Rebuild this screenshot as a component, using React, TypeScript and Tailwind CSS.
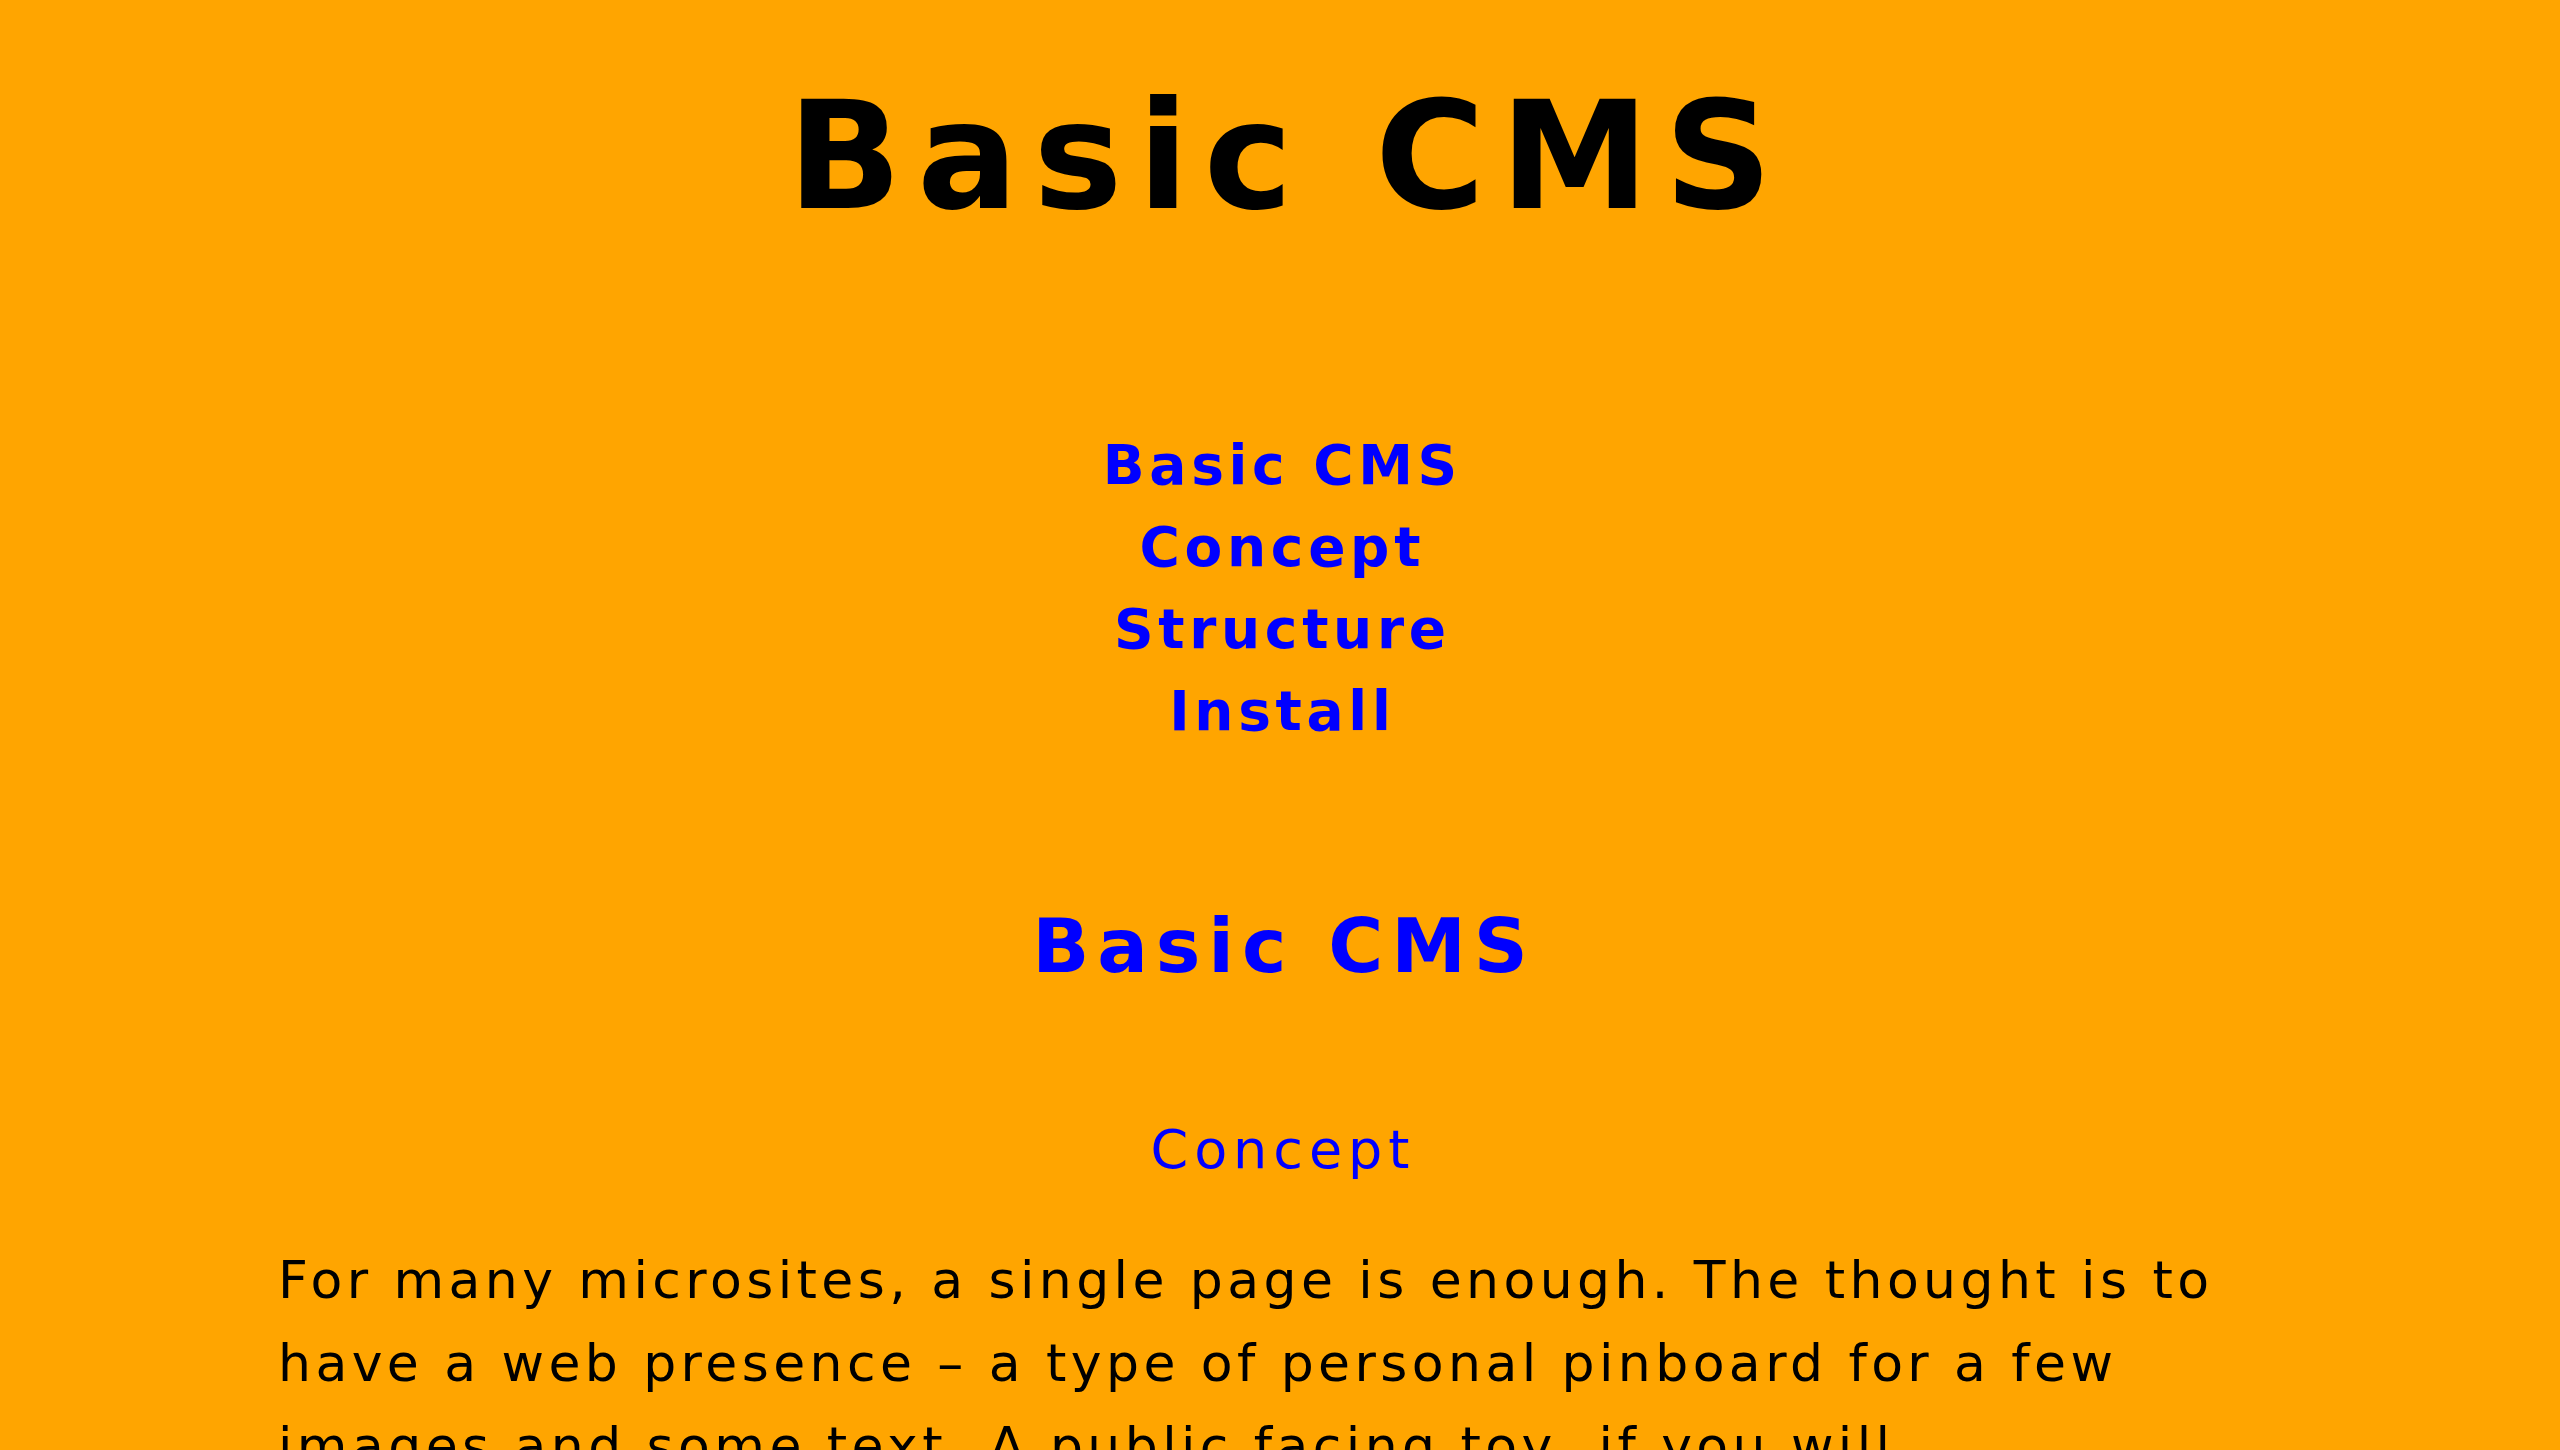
import React from "react";

const font = { fontFamily: '"DejaVu Sans", "Liberation Sans", sans-serif' };

export default function App() {
  return (
    <div className="min-h-screen w-full bg-[#ffa500] text-black" style={font}>
      <header className="pt-[81px] text-center">
        <h1 className="text-[150px] font-bold leading-none tracking-[0.1em] pl-[0.1em]">Basic CMS</h1>
      </header>
      <nav className="mt-[193px] flex flex-col items-center text-[55px] font-bold leading-[82px] tracking-[0.085em] text-[#0000ff]">
        <a href="#basic-cms" className="pl-[0.085em]">Basic CMS</a>
        <a href="#concept" className="pl-[0.085em]">Concept</a>
        <a href="#structure" className="pl-[0.085em]">Structure</a>
        <a href="#install" className="pl-[0.085em]">Install</a>
      </nav>
      <main className="mx-auto mt-[149px] w-[2004px]">
        <h2 id="basic-cms" className="text-center text-[75px] font-bold leading-[90px] tracking-[0.105em] pl-[0.105em] text-[#0000ff]">
          Basic CMS
        </h2>
        <h3 id="concept" className="mt-[126px] text-center text-[54px] font-normal leading-[65px] tracking-[0.11em] pl-[0.11em] text-[#0000ff]">
          Concept
        </h3>
        <p className="mt-[57px] text-[52px] leading-[83px] tracking-[0.085em]">
          For many microsites, a single page is enough. The thought is to have a web presence – a type of personal pinboard for a few images and some text. A public facing toy, if you will.
        </p>
      </main>
    </div>
  );
}
